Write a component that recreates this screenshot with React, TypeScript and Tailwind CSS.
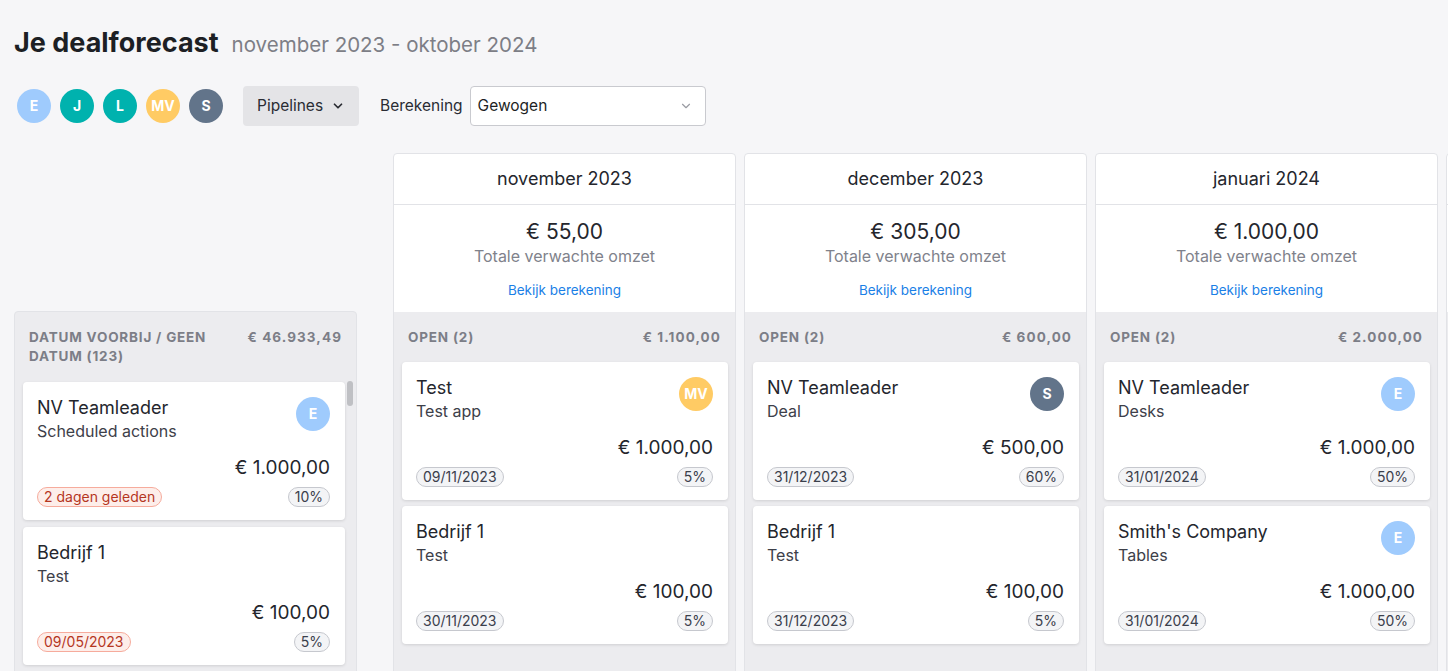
import { ChevronDown } from 'lucide-react';

type Deal = {
  company: string;
  title: string;
  amount: string;
  date: string;
  overdue?: boolean;
  pct: string;
  owner?: string;
};

type Month = {
  name: string;
  total: string;
  openCount: number;
  openTotal: string;
  deals: Deal[];
};

const avatarColors: Record<string, string> = {
  E: 'bg-[#9fcbfd]',
  J: 'bg-[#00b2ae]',
  L: 'bg-[#00b2ae]',
  MV: 'bg-[#ffcb64]',
  S: 'bg-[#62748a]',
};

const pastDeals: Deal[] = [
  { company: 'NV Teamleader', title: 'Scheduled actions', amount: '€ 1.000,00', date: '2 dagen geleden', overdue: true, pct: '10%', owner: 'E' },
  { company: 'Bedrijf 1', title: 'Test', amount: '€ 100,00', date: '09/05/2023', overdue: true, pct: '5%' },
];

const months: Month[] = [
  {
    name: 'november 2023',
    total: '€ 55,00',
    openCount: 2,
    openTotal: '€ 1.100,00',
    deals: [
      { company: 'Test', title: 'Test app', amount: '€ 1.000,00', date: '09/11/2023', pct: '5%', owner: 'MV' },
      { company: 'Bedrijf 1', title: 'Test', amount: '€ 100,00', date: '30/11/2023', pct: '5%' },
    ],
  },
  {
    name: 'december 2023',
    total: '€ 305,00',
    openCount: 2,
    openTotal: '€ 600,00',
    deals: [
      { company: 'NV Teamleader', title: 'Deal', amount: '€ 500,00', date: '31/12/2023', pct: '60%', owner: 'S' },
      { company: 'Bedrijf 1', title: 'Test', amount: '€ 100,00', date: '31/12/2023', pct: '5%' },
    ],
  },
  {
    name: 'januari 2024',
    total: '€ 1.000,00',
    openCount: 2,
    openTotal: '€ 2.000,00',
    deals: [
      { company: 'NV Teamleader', title: 'Desks', amount: '€ 1.000,00', date: '31/01/2024', pct: '50%', owner: 'E' },
      { company: "Smith's Company", title: 'Tables', amount: '€ 1.000,00', date: '31/01/2024', pct: '50%', owner: 'E' },
    ],
  },
];

function Avatar({ initials }: { initials: string }) {
  return (
    <div
      className={`${avatarColors[initials]} h-[34px] w-[34px] rounded-full flex items-center justify-center text-white text-[14px] font-bold shrink-0`}
    >
      {initials}
    </div>
  );
}

function Pill({ children, red }: { children: React.ReactNode; red?: boolean }) {
  return (
    <span
      className={`inline-flex items-center h-[20px] px-[6px] rounded-full border text-[14px] leading-none ${
        red ? 'bg-[#fdeeea] border-[#f6ab9c] text-[#b5361f]' : 'bg-[#f3f4f6] border-[#c6c8ce] text-[#3b404c]'
      }`}
    >
      {children}
    </span>
  );
}

function DealCard({ deal }: { deal: Deal }) {
  return (
    <div className="bg-white rounded-[4px] shadow-[0_1px_3px_rgba(0,0,0,0.12)] pt-[15px] pb-[13px] pl-[14px] pr-[15px]">
      <div className="flex items-start justify-between h-[45px]">
        <div>
          <div className="text-[18px] leading-[22px] text-[#24262d]">{deal.company}</div>
          <div className="text-[16px] leading-[24px] text-[#3d4049]">{deal.title}</div>
        </div>
        {deal.owner && <Avatar initials={deal.owner} />}
      </div>
      <div className="mt-[14px] text-right text-[19px] leading-[24px] text-[#24262d]">{deal.amount}</div>
      <div className="mt-[7px] flex items-center justify-between">
        <Pill red={deal.overdue}>{deal.date}</Pill>
        <Pill>{deal.pct}</Pill>
      </div>
    </div>
  );
}

function MonthColumn({ month }: { month: Month }) {
  return (
    <div className="w-[343px] shrink-0 bg-white border border-[#e2e3e7] rounded-t-[4px] flex flex-col h-[540px]">
      <div className="h-[51px] flex items-center justify-center border-b border-[#e2e3e7] text-[18px] text-[#24262d]">
        {month.name}
      </div>
      <div className="h-[107px] flex flex-col items-center pt-[14px]">
        <div className="text-[21px] leading-[26px] text-[#24262d]">{month.total}</div>
        <div className="text-[16px] leading-[22px] text-[#80828b]">Totale verwachte omzet</div>
        <a className="mt-[14px] text-[13.5px] leading-[18px] text-[#1b7fe6]">Bekijk berekening</a>
      </div>
      <div className="flex-1 bg-[#ececef] px-[7px]">
        <div className="h-[50px] flex items-center justify-between px-[7px] text-[13.5px] font-bold tracking-[0.06em] text-[#7c7e87]">
          <span>OPEN ({month.openCount})</span>
          <span className="tracking-[0.08em]">{month.openTotal}</span>
        </div>
        <div className="flex flex-col gap-[6px] pl-[1px]">
          {month.deals.map((d, i) => (
            <DealCard key={i} deal={d} />
          ))}
        </div>
      </div>
    </div>
  );
}

function EmptyColumn() {
  return (
    <div className="w-[343px] shrink-0 bg-white border border-[#e2e3e7] rounded-t-[4px] flex flex-col h-[540px]">
      <div className="h-[51px] border-b border-[#e2e3e7]" />
      <div className="h-[107px]" />
      <div className="flex-1 bg-[#ececef]" />
    </div>
  );
}

export default function App() {
  return (
    <div
      className="h-[671px] w-[1448px] overflow-hidden bg-[#f6f6f8] text-[#24262d]"
      style={{ fontFamily: 'Inter, "Noto Sans", sans-serif' }}
    >
      <div className="pl-[14px] pt-[27px]">
        <div className="flex items-baseline gap-[13px]">
          <h1 className="text-[27px] leading-[32px] font-bold text-[#1d1f24]">Je dealforecast</h1>
          <span className="text-[20.5px] text-[#7d7e86]">november 2023 - oktober 2024</span>
        </div>

        <div className="mt-[25px] flex items-center h-[40px]">
          <div className="flex items-center gap-[9px] pl-[3px]">
            {['E', 'J', 'L', 'MV', 'S'].map((i) => (
              <Avatar key={i} initials={i} />
            ))}
          </div>
          <button className="ml-[20px] h-[40px] w-[116px] pl-[14px] rounded-[4px] bg-[#e4e4e7] flex items-center gap-[8px] text-[15.5px] text-[#2a2c33]">
            Pipelines
            <ChevronDown className="h-[14px] w-[14px]" strokeWidth={3} />
          </button>
          <span className="ml-[21px] text-[15.5px] text-[#2a2c33]">Berekening</span>
          <div className="ml-[7px] h-[40px] w-[236px] bg-white border border-[#c9cacf] rounded-[4px] flex items-center justify-between pl-[7px] pr-[12px] text-[15.5px] text-[#1d1f24]">
            Gewogen
            <ChevronDown className="h-[14px] w-[14px] text-[#9a9ca3]" strokeWidth={2} />
          </div>
        </div>

        <div className="mt-[27px] flex items-start">
          <div className="mt-[158px] w-[343px] shrink-0 bg-[#ececef] border border-[#e2e3e7] rounded-t-[4px] h-[400px]">
            <div className="flex justify-between px-[14px] pt-[16px] pb-[16px] text-[13.5px] leading-[19px] font-bold tracking-[0.06em] text-[#7c7e87]">
              <span className="w-[200px]">DATUM VOORBIJ / GEEN DATUM (123)</span>
              <span className="tracking-[0.08em]">€ 46.933,49</span>
            </div>
            <div className="flex pl-[8px] pr-[3px]">
              <div className="flex-1 flex flex-col gap-[7px]">
                {pastDeals.map((d, i) => (
                  <DealCard key={i} deal={d} />
                ))}
              </div>
              <div className="w-[6px] ml-[2px] mt-[-1px]">
                <div className="h-[25px] rounded-full bg-[#bfc0c4]" />
              </div>
            </div>
          </div>

          <div className="ml-[36px] flex gap-[8px]">
            {months.map((m) => (
              <MonthColumn key={m.name} month={m} />
            ))}
            <EmptyColumn />
          </div>
        </div>
      </div>
    </div>
  );
}
